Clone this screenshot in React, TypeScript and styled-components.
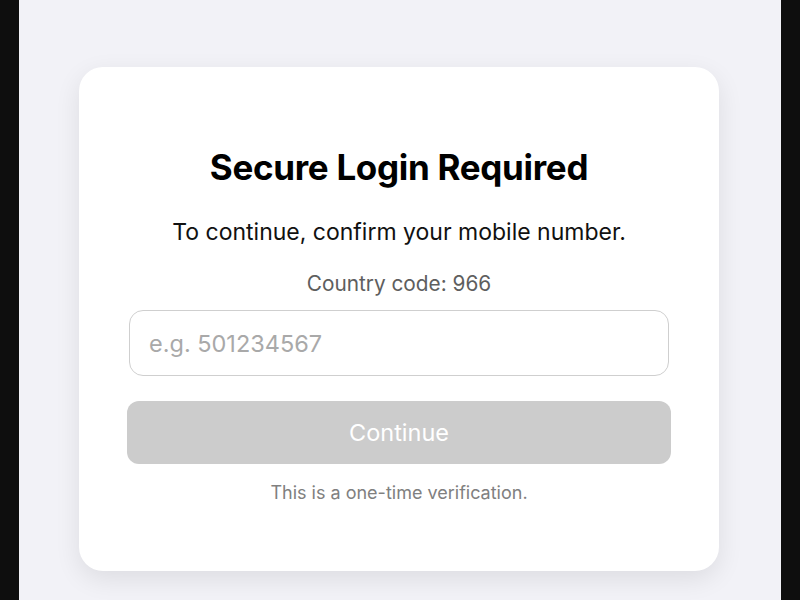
import React, { useState } from "react";
import styled, { createGlobalStyle } from "styled-components";

const GlobalStyle = createGlobalStyle`
  html, body {
    margin: 0;
    padding: 0;
    background: #0e0e0e;
  }
  body {
    font-family: Inter, "Noto Sans", "Liberation Sans", sans-serif;
    -webkit-font-smoothing: antialiased;
  }
`;

const Page = styled.main`
  width: 762px;
  height: 600px;
  margin: 0 auto;
  background: #f2f2f7;
  display: flex;
  justify-content: center;
  align-items: flex-start;
  padding: 67px 2px 0 0;
  box-sizing: border-box;
  overflow: hidden;
`;

const Card = styled.section`
  width: 640px;
  height: 504px;
  box-sizing: border-box;
  padding: 80px 48px 0;
  background: #ffffff;
  border-radius: 24px;
  box-shadow: 0 8px 26px rgba(0, 0, 0, 0.09);
  display: flex;
  flex-direction: column;
  align-items: center;
`;

const Title = styled.h1`
  margin: 0;
  font-size: 35px;
  font-weight: 700;
  line-height: 40px;
  color: #000;
  letter-spacing: -0.3px;
`;

const Lead = styled.p`
  margin: 31px 0 0;
  font-size: 23px;
  line-height: 28px;
  color: #111;
`;

const CountryCode = styled.p`
  margin: 26px 0 0;
  font-size: 20.8px;
  line-height: 24px;
  color: #5e5e5e;
`;

const PhoneInput = styled.input`
  margin: 14px 2px 0;
  width: 540px;
  height: 66px;
  box-sizing: border-box;
  padding: 0 19px;
  border: 1.5px solid #cfcfcf;
  border-radius: 14px;
  font-family: inherit;
  font-size: 23.5px;
  color: #222;
  outline: none;

  &::placeholder {
    color: #a9a9a9;
  }
`;

const SubmitButton = styled.button<{ $ready: boolean }>`
  margin-top: 25px;
  width: 544px;
  height: 63px;
  border: none;
  border-radius: 12px;
  background: ${(p) => (p.$ready ? "#007aff" : "#cccccc")};
  color: #fff;
  font-family: inherit;
  font-size: 23.5px;
  cursor: ${(p) => (p.$ready ? "pointer" : "default")};
`;

const Footnote = styled.p`
  margin: 18px 0 0;
  font-size: 18px;
  line-height: 22px;
  color: #808080;
`;

export default function App() {
  const [phone, setPhone] = useState("");
  const ready = phone.trim().length >= 9;

  return (
    <>
      <GlobalStyle />
      <Page>
        <Card>
          <Title>Secure Login Required</Title>
          <Lead>To continue, confirm your mobile number.</Lead>
          <CountryCode>Country code: 966</CountryCode>
          <PhoneInput
            type="tel"
            placeholder="e.g. 501234567"
            value={phone}
            onChange={(e) => setPhone(e.target.value)}
          />
          <SubmitButton $ready={ready} disabled={!ready}>
            Continue
          </SubmitButton>
          <Footnote>This is a one-time verification.</Footnote>
        </Card>
      </Page>
    </>
  );
}
